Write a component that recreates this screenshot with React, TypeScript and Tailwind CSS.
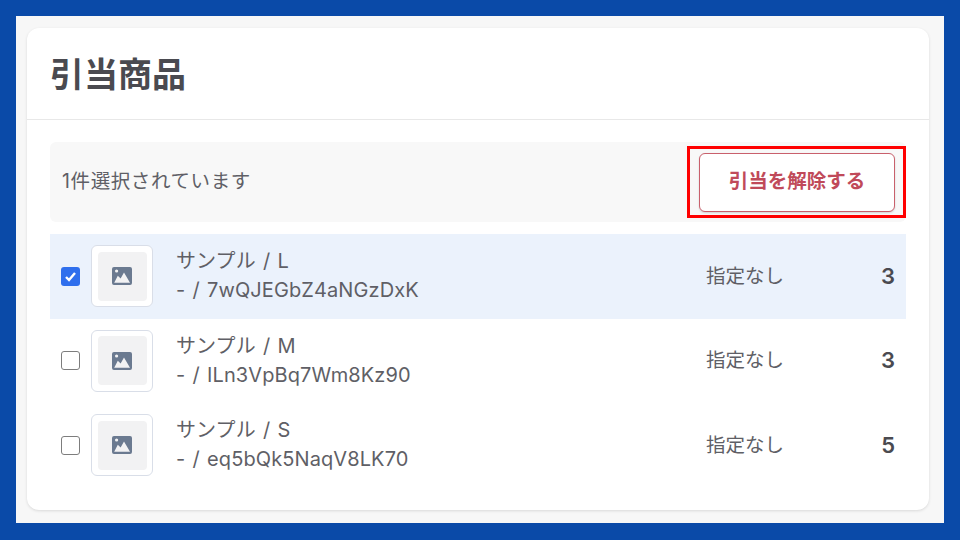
const rows = [
  { name: 'サンプル / L', sku: '- / 7wQJEGbZ4aNGzDxK', qty: 3, checked: true },
  { name: 'サンプル / M', sku: '- / ILn3VpBq7Wm8Kz90', qty: 3, checked: false },
  { name: 'サンプル / S', sku: '- / eq5bQk5NaqV8LK70', qty: 5, checked: false },
];

function ImageIcon(): React.JSX.Element {
  return (
    <svg width="20" height="18" viewBox="0 0 20 18">
      <path
        fill="#6b7a90"
        fillRule="evenodd"
        d="M2 0h16a2 2 0 0 1 2 2v14a2 2 0 0 1-2 2H2a2 2 0 0 1-2-2V2a2 2 0 0 1 2-2zm2.6 2.4a1.6 1.6 0 1 0 0 3.2 1.6 1.6 0 0 0 0-3.2zM2.2 15.8h15.8L12 5.6 8.6 11.4 5.8 8.8z"
      />
    </svg>
  );
}

export default function App(): React.JSX.Element {
  return (
    <div
      className="h-[540px] w-[960px] overflow-hidden bg-[#0a4aa8] pb-[17px] pl-4 pr-4 pt-4"
      style={{ fontFamily: '"Inter", "Noto Sans CJK JP", sans-serif' }}
    >
      <div className="h-full bg-[#f7f7f7] pl-[11px] pr-[15px] pt-3">
        <div className="relative h-[482px] rounded-xl bg-white shadow-[0_1px_3px_rgba(0,0,0,0.12)]">
          <div className="flex h-[92px] items-center border-b border-[#e8e8e8] pl-[23px] pt-[3px]">
            <h1 className="text-[34px] font-bold leading-none text-[#4a4a50]">引当商品</h1>
          </div>

          <div className="px-[23px] pt-[22px]">
            <div className="flex h-20 items-center justify-between rounded-md bg-[#f8f8f8] pl-3 pr-[11px]">
              <span className="text-[19.5px] tracking-[0.6px] text-[#5f5f66]">1件選択されています</span>
              <button
                type="button"
                className="h-[59px] w-[196px] rounded-md border border-[#c9606c] bg-white text-[19.5px] font-bold text-[#c04a5a] shadow-[0_1px_2px_rgba(0,0,0,0.15)]"
              >
                引当を解除する
              </button>
            </div>

            <div className="mt-3">
              {rows.map((row) => (
                <div
                  key={row.sku}
                  className={`flex h-[84.5px] items-center pl-[11px] pr-[11px] ${row.checked ? 'bg-[#ebf2fc]' : 'bg-white'}`}
                >
                  {row.checked ? (
                    <div className="flex h-[19px] w-[19px] items-center justify-center rounded-[3px] bg-[#2f6fed]">
                      <svg width="13" height="13" viewBox="0 0 13 13">
                        <path d="M2 7l3 3 6-7" fill="none" stroke="#fff" strokeWidth="2.4" />
                      </svg>
                    </div>
                  ) : (
                    <div className="h-[19px] w-[19px] rounded-[3px] border-[1.5px] border-[#7d7d7d] bg-white" />
                  )}
                  <div className="ml-[11px] flex h-[62px] w-[62px] items-center justify-center rounded-md border border-[#d9dee8] bg-white">
                    <div className="flex h-[49px] w-[49px] items-center justify-center rounded bg-[#f2f2f3]">
                      <ImageIcon />
                    </div>
                  </div>
                  <div className="ml-[23px] w-[530px] text-[20px] leading-[29px] tracking-[0.1px] text-[#5f5f66] [word-spacing:1.5px]">
                    <div>{row.name}</div>
                    <div>{row.sku}</div>
                  </div>
                  <span className="text-[19.5px] text-[#5f5f66]">指定なし</span>
                  <span className="ml-auto text-[22px] font-semibold text-[#4a4a50]">{row.qty}</span>
                </div>
              ))}
            </div>
          </div>

          <div className="pointer-events-none absolute left-[660px] top-[118px] h-[72px] w-[219px] border-[3px] border-[#f00]" />
        </div>
      </div>
    </div>
  );
}
